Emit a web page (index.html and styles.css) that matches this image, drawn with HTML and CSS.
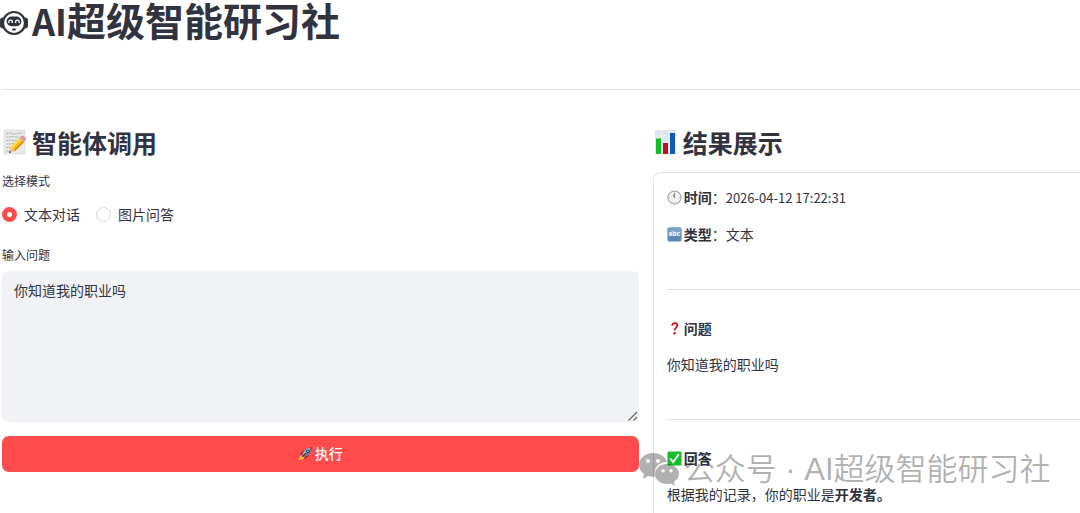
FILE: index.html
```html
<!DOCTYPE html>
<html lang="zh-CN">
<head>
<meta charset="utf-8">
<title>AI超级智能研习社</title>
<link rel="stylesheet" href="styles.css">
</head>
<body>
<header class="page-header">
  <h1 class="title">
    <svg class="title-icon" viewBox="0 0 28 26" aria-hidden="true">
      <rect x="0" y="7.500" width="6" height="11" rx="3" fill="#31333f"/>
      <rect x="22" y="7.500" width="6" height="11" rx="3" fill="#31333f"/>
      <circle cx="14" cy="13" r="11" fill="#fff" stroke="#31333f" stroke-width="2.200"/>
      <rect x="6.600" y="6.600" width="14.800" height="9.600" rx="4.800" fill="#31333f"/>
      <path d="M8.800 13v-1a1.800 1.800 0 0 1 3.600 0v1M15.600 13v-1a1.800 1.800 0 0 1 3.600 0v1" fill="none" stroke="#fff" stroke-width="1.300"/>
      <rect x="12" y="18.400" width="4" height="2" rx="1" fill="#31333f"/>
    </svg>
    <span><span class="latin">AI</span>超级智能研习社</span>
  </h1>
</header>
<hr class="rule">
<main class="columns">
  <section>
    <h2 class="heading">
      <svg class="heading-icon" viewBox="0 0 24 26" aria-hidden="true">
        <rect x="2" y="1" width="21" height="24" fill="#e9e9e9" stroke="#d8d8d8" stroke-width=".6"/>
        <path d="M4 4.500h3l1-1 2 1.500h4l2-1h4M4 8h5l1-1 2 1h5M4 11.500h3l2-1 1 1h5M4 15h5l1-1 2 1M4 18.500h4M4 22h3" fill="none" stroke="#a8a8a8" stroke-width=".9" stroke-dasharray="2.500 .7"/>
        <path d="M7 24l1.200-6 5 4z" fill="#edc394"/>
        <path d="M7 24l.5-2.300 1.700 1.500z" fill="#333"/>
        <path d="M8.200 18L17.300 8.900l4.600 4.400L13.200 22z" fill="#f8bd20"/>
        <path d="M8.200 18L17.300 8.900l1.500 1.500-8.900 9z" fill="#ffdf56"/>
        <path d="M11.800 21L20.700 12.200l1.200 1.100L13.200 22z" fill="#d58b10"/>
        <path d="M17.300 8.900l1.200-1.200 4.600 4.400-1.200 1.200z" fill="#aeb4ba"/>
        <path d="M18.500 7.700c1-1.300 2.800-1.200 4.200 0s1.600 3 .4 4.400z" fill="#ee8c92"/>
      </svg>
      <span>智能体调用</span>
    </h2>
    <form class="form">
      <fieldset class="modes">
        <legend class="label">选择模式</legend>
        <div class="options">
          <label class="option"><input class="radio" type="radio" name="mode" checked>文本对话</label>
          <label class="option"><input class="radio" type="radio" name="mode">图片问答</label>
        </div>
      </fieldset>
      <label class="label question-label" for="question">输入问题</label>
      <div class="field">
        <textarea class="question" id="question">你知道我的职业吗</textarea>
        <svg class="grip" viewBox="0 0 10 10" aria-hidden="true"><path d="M.5 9.500l8.500-8.500M5.500 9.500l3.500-3.500" stroke="#65666d" stroke-width="1.100"/></svg>
      </div>
      <button class="run" type="button">
        <svg class="icon" viewBox="0 0 16 16" aria-hidden="true">
          <path d="M1 15c0-3 1-5 3.500-5.500L7 12c-1 2-3 3-6 3z" fill="#ffc62d"/>
          <path d="M2 9l3-4h3L5 10zM7 11l4-3v3l-4 3.500z" fill="#c4161c"/>
          <path d="M4 10C5 5 9 1 15 1c0 6-4 10-9 11z" fill="#5d87a3"/>
          <path d="M5 9c1.500-4 5-7 10-8L5 11z" fill="#a9c7d6"/>
          <path d="M11.500 1.600L15 1l-.5 3.600z" fill="#d5262a"/>
          <circle cx="10.500" cy="5.500" r="1.900" fill="#26323d"/><circle cx="10.500" cy="5.500" r=".8" fill="#edf6fa"/>
          <path d="M4.500 11.500l4-4" stroke="#8e1519" stroke-width="1.300"/>
        </svg>
        <span>执行</span>
      </button>
    </form>
  </section>
  <section class="result-column">
    <h2 class="heading">
      <svg class="heading-icon" viewBox="0 0 24 26" aria-hidden="true">
        <rect x="2" y="1" width="21" height="24" fill="#dce8f0"/>
        <path d="M2 7h21M2 13h21M2 19h21M8.500 1v24M16 1v24" stroke="#eef4f8" stroke-width=".8"/>
        <rect x="3" y="9.500" width="5" height="15.500" fill="#11bd20"/>
        <rect x="10" y="14" width="5" height="11" fill="#c40e1c"/>
        <rect x="17" y="4" width="5" height="21" fill="#1459b5"/>
      </svg>
      <span>结果展示</span>
    </h2>
    <article class="panel">
      <p class="line">
        <svg class="icon" viewBox="0 0 16 16" aria-hidden="true"><circle cx="8" cy="8" r="7" fill="#f3f3f3" stroke="#a4a4a4" stroke-width="1.200"/><path d="M8 8.500V3.500M8 8.500l-1.500-3.500" stroke="#777" stroke-width=".9"/><path d="M8 1.800v1M8 13.200v1M1.800 8h1M13.200 8h1" stroke="#999" stroke-width=".8"/></svg>
        <span><strong>时间</strong>：<time class="time">2026-04-12 17:22:31</time></span>
      </p>
      <p class="line">
        <svg class="icon" viewBox="0 0 16 16" aria-hidden="true"><rect x=".5" y=".5" width="15" height="15" rx="2" fill="#5b8ab5"/><path d="M.5 8V2.500a2 2 0 0 1 2-2h11a2 2 0 0 1 2 2V8z" fill="#7ba3c6"/><text class="abc" x="8" y="10" text-anchor="middle">abc</text></svg>
        <span><strong>类型</strong>：文本</span>
      </p>
      <hr class="rule panel-rule">
      <p class="line">
        <svg class="icon" viewBox="0 0 16 16" aria-hidden="true"><path d="M5.500 5C5.700 3 6.800 2.300 8.200 2.300c1.700 0 2.800 1 2.800 2.500 0 2.300-2.800 2.400-2.800 5.200" fill="none" stroke="#e3131b" stroke-width="2"/><circle cx="8.100" cy="13" r="1.300" fill="#e3131b"/></svg>
        <strong>问题</strong>
      </p>
      <p class="line">你知道我的职业吗</p>
      <hr class="rule panel-rule">
      <p class="line">
        <svg class="icon" viewBox="0 0 16 16" aria-hidden="true"><rect x=".5" y=".5" width="15" height="15" rx="1.500" fill="#18bd2b"/><path d="M3.500 8l3 4 6-8.500" fill="none" stroke="#fff" stroke-width="2"/></svg>
        <strong>回答</strong>
      </p>
      <p class="line"><span>根据我的记录，你的职业是<strong>开发者。</strong></span></p>
    </article>
    <div class="watermark">
      <svg class="wechat" viewBox="0 0 42 36" aria-hidden="true">
        <path fill-rule="evenodd" d="M15 1C7 1 1 6 1 13c0 4 2 7 5 9l-1 5 5-3c2 .7 5 1 7 .7C15 16 21 10 29 10 28 5 22 1 15 1zM10 7a2 2 0 1 1 0 4 2 2 0 0 1 0-4zM20 7a2 2 0 1 1 0 4 2 2 0 0 1 0-4z"/>
        <path fill-rule="evenodd" d="M29 12c-7 0-12 4.500-12 10s5 10 12 10c1.500 0 3-.2 4-.6l4 2.600-1-4.300c3-2 5-4.700 5-7.700 0-5.500-5-10-12-10zM25 17a1.700 1.700 0 1 1 0 3.400 1.700 1.700 0 0 1 0-3.400zM33 17a1.700 1.700 0 1 1 0 3.400 1.700 1.700 0 0 1 0-3.400z"/>
      </svg>
      <span>公众号 · AI超级智能研习社</span>
    </div>
  </section>
</main>
</body>
</html>
```
FILE: styles.css
```css
* { box-sizing: border-box; }
body {
  margin: 0;
  min-height: 100vh;
  overflow: hidden;
  background: #fff;
  color: #31333f;
  font-family: "Noto Sans CJK SC", sans-serif;
  font-size: 14px;
  line-height: 20px;
}
h1, h2, p { margin: 0; }
.title {
  display: flex;
  align-items: center;
  gap: 4px;
  font-size: 39px;
  line-height: 38px;
}
.title-icon { width: 28px; height: 26px; margin-top: 6px; }
.latin { font-size: 36px; }
.rule { height: 1px; margin: 50px 0 37px 2px; border: 0; background: #e3e3e6; }
.columns {
  display: grid;
  grid-template-columns: 1.49fr 1fr;
  gap: 14px;
  padding-left: 2px;
}
.heading {
  display: flex;
  align-items: center;
  gap: 6px;
  margin-bottom: 15px;
  font-size: 25px;
  line-height: 30px;
}
.heading-icon { width: 24px; height: 26px; }
.form { display: flex; flex-direction: column; }
.modes { margin: 0; padding: 0; border: 0; }
.label { padding: 0; font-size: 12px; line-height: 18px; }
.options { display: flex; gap: 16px; padding-top: 14px; }
.option { display: flex; align-items: center; gap: 7px; }
.radio {
  appearance: none;
  width: 15px;
  height: 15px;
  margin: 0;
  border: 1px solid #d5d6da;
  border-radius: 50%;
  background: #fff;
}
.radio:checked { border: 5px solid #ff4b4b; }
.question-label { margin: 22px 0 7px; }
.field { position: relative; display: flex; }
.question {
  flex: 1;
  height: 151px;
  padding: 9px 12px;
  border: 0;
  border-radius: 7px;
  background: #f0f2f6;
  color: inherit;
  font: inherit;
  resize: none;
}
.grip { position: absolute; right: 1px; bottom: 1px; width: 10px; height: 10px; }
.run {
  display: flex;
  align-items: center;
  justify-content: center;
  gap: 2px;
  height: 36px;
  margin-top: 14px;
  padding: 0 0 2px;
  border: 0;
  border-radius: 7px;
  background: #ff4b4b;
  color: #fff;
  font: inherit;
  font-weight: 500;
}
.icon { flex: none; width: 15px; height: 15px; }
.result-column { position: relative; }
.panel {
  padding: 14px 0 14px 13px;
  border: 1px solid #e3e3e6;
  border-right: 0;
  border-radius: 7px 0 0 7px;
}
.line { display: flex; align-items: center; gap: 2px; }
.line + .line { margin-top: 16px; }
.panel-rule { margin: 45px 0 28px; }
.time { font-size: 13px; }
.abc { fill: #fff; font-family: "Liberation Sans", sans-serif; font-size: 7px; font-weight: 700; }
.watermark {
  position: absolute;
  bottom: 29px;
  left: -15px;
  display: flex;
  align-items: center;
  gap: 4px;
  color: #000;
  font-family: "Liberation Sans", "Noto Sans CJK SC", sans-serif;
  font-size: 31px;
  font-weight: 350;
  line-height: 40px;
  white-space: nowrap;
  opacity: .3;
  pointer-events: none;
}
.wechat { width: 42px; height: 36px; fill: currentColor; }
```
